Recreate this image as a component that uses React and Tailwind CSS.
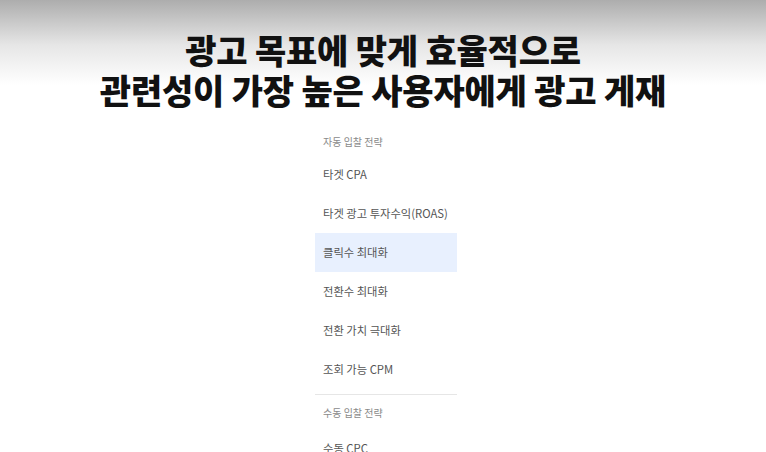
const AUTO = ['타겟 CPA', '타겟 광고 투자수익(ROAS)', '클릭수 최대화', '전환수 최대화', '전환 가치 극대화', '조회 가능 CPM']
const MANUAL = ['수동 CPC']

function Item({ label, active }) {
  return (
    <div className={`flex h-[39px] items-center pl-2 text-[11.3px] text-[#555] ${active ? 'bg-[#e8f0fe]' : ''}`}>
      {label}
    </div>
  )
}

export default function App() {
  return (
    <div
      className="h-[452px] w-[766px] overflow-hidden bg-[linear-gradient(to_bottom,#adadad_0px,#e6e6e6_45px,#ffffff_85px)]"
      style={{ fontFamily: '"Noto Sans CJK KR", "Noto Sans", sans-serif' }}
    >
      <div className="pt-[30px] text-center">
        <h1 className="text-[34px] font-black leading-[40px] tracking-[-0.2px] text-[#111]">
          광고 목표에 맞게 효율적으로
          <br />
          관련성이 가장 높은 사용자에게 광고 게재
        </h1>
      </div>
      <div className="mt-[18px] ml-[315px] w-[142px]">
        <div className="flex h-[27px] items-center pl-2 text-[10px] text-[#8a8a8a]">자동 입찰 전략</div>
        {AUTO.map((l) => (
          <Item key={l} label={l} active={l === '클릭수 최대화'} />
        ))}
        <div className="mt-[5px] h-px bg-[#e6e6e6]" />
        <div className="flex h-[34px] items-center pl-2 text-[10px] text-[#8a8a8a]">수동 입찰 전략</div>
        {MANUAL.map((l) => (
          <Item key={l} label={l} />
        ))}
      </div>
    </div>
  )
}
